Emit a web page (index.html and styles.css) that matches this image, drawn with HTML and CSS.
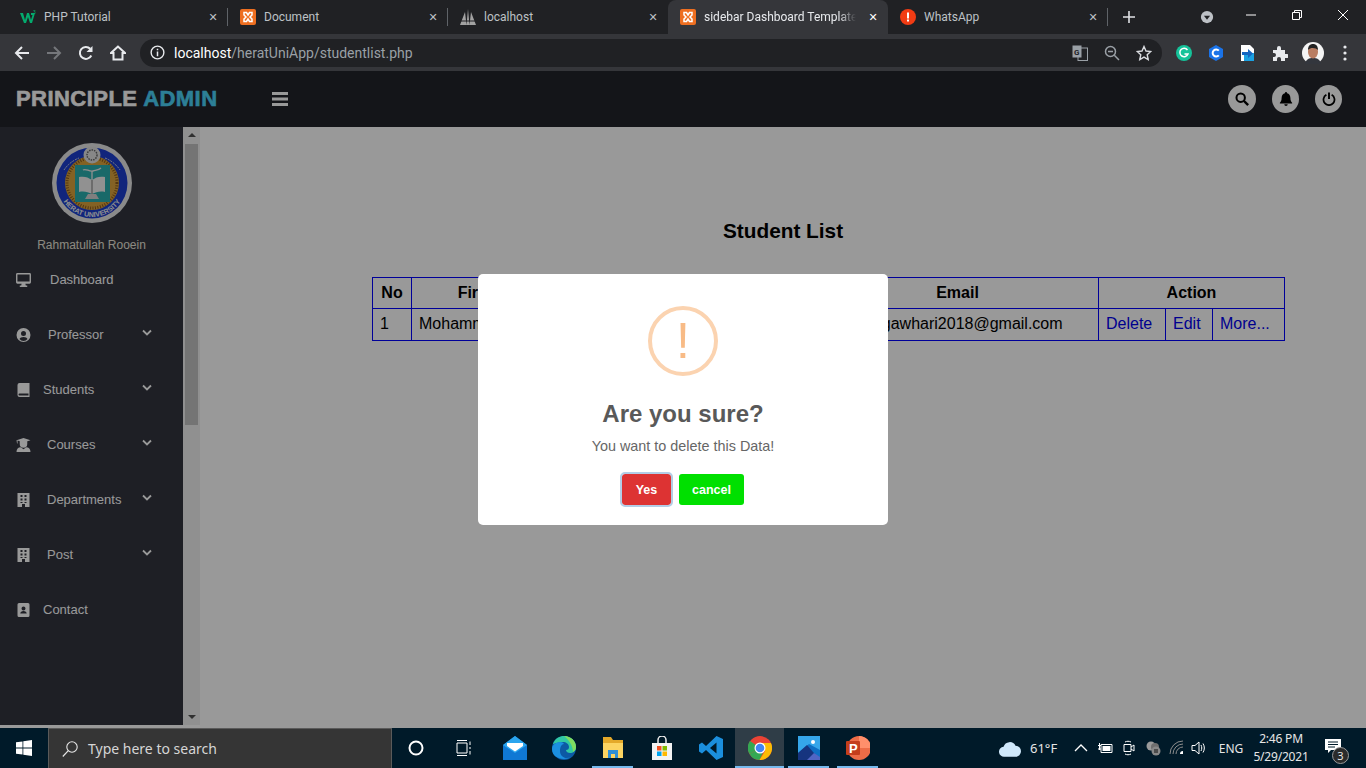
FILE: index.html
```html
<!DOCTYPE html>
<html lang="en">
<head>
    <meta charset="UTF-8">
    <title>Student List</title>
    <link rel="stylesheet" href="styles.css">
</head>
<body>

<div class="chrome">
    <div class="tabstrip">
        <div class="tab tab-sep">
            <svg class="favicon" viewBox="0 0 16 16"><path d="M0 4h3l2 7 2-7h2l2 7 1.500-5H11V4h4l-3 10H10L8 8l-2 6H4z" fill="#04aa6d"/><text x="13" y="5" class="fav-sup">3</text></svg>
            <span class="tab-title">PHP Tutorial</span>
            <span class="tab-close">✕</span>
        </div>
        <div class="tab tab-sep">
            <svg class="favicon" viewBox="0 0 16 16"><rect width="16" height="16" rx="2" fill="#ee6f21"/><path d="M4 3.500h2.500L8 6l1.500-2.500H12V6l-2 2 2 2v2.500H9.500L8 10l-1.500 2.500H4V10l2-2-2-2z" fill="none" stroke="#fff" stroke-width="1.500"/></svg>
            <span class="tab-title">Document</span>
            <span class="tab-close">✕</span>
        </div>
        <div class="tab">
            <svg class="favicon" viewBox="0 0 16 16"><path d="M0 16 5 3l1.500 13zM6.500 16 8 0l1.500 16zM9.500 16 11 3l5 13z" fill="#a2a2a2"/><path d="M1 12h14" stroke="#202124"/></svg>
            <span class="tab-title">localhost</span>
            <span class="tab-close">✕</span>
        </div>
        <div class="tab tab-active">
            <svg class="favicon" viewBox="0 0 16 16"><rect width="16" height="16" rx="2" fill="#ee6f21"/><path d="M4 3.500h2.500L8 6l1.500-2.500H12V6l-2 2 2 2v2.500H9.500L8 10l-1.500 2.500H4V10l2-2-2-2z" fill="none" stroke="#fff" stroke-width="1.500"/></svg>
            <span class="tab-title">sidebar Dashboard Template</span>
            <span class="tab-close">✕</span>
        </div>
        <div class="tab tab-sep">
            <svg class="favicon" viewBox="0 0 16 16"><circle cx="8" cy="8" r="8" fill="#f13c14"/><rect x="7" y="3.500" width="2" height="6" fill="#fff"/><rect x="7" y="10.500" width="2" height="2" fill="#fff"/></svg>
            <span class="tab-title">WhatsApp</span>
            <span class="tab-close">✕</span>
        </div>
        <svg class="newtab" viewBox="0 0 12 12"><path d="M6 0v12M0 6h12" stroke="#dfe1e5" stroke-width="1.600"/></svg>
        <svg class="tab-search" viewBox="0 0 16 16"><circle cx="8" cy="8" r="7" fill="#bdc1c6"/><path d="M4.500 6.500h7L8 11z" fill="#202124"/></svg>
        <div class="winctl">
            <svg viewBox="0 0 10 10"><path d="M0 5h10" stroke="#fff"/></svg>
            <svg viewBox="0 0 10 10"><path d="M.5 2.500h7v7h-7zM2.500 2.500v-2h7v7h-2" fill="none" stroke="#fff"/></svg>
            <svg viewBox="0 0 10 10"><path d="M0 0l10 10M10 0 0 10" stroke="#fff"/></svg>
        </div>
    </div>
    <div class="toolbar">
        <svg class="tool" viewBox="0 0 16 16"><path d="M15 8H2M8 2 2 8l6 6" fill="none" stroke="#e8eaed" stroke-width="2"/></svg>
        <svg class="tool" viewBox="0 0 16 16"><path d="M1 8h13M8 2l6 6-6 6" fill="none" stroke="#75777b" stroke-width="2"/></svg>
        <svg class="tool" viewBox="0 0 16 16"><path d="M13.300 10.500A6 6 0 1 1 12.200 3.700" fill="none" stroke="#e8eaed" stroke-width="2"/><path d="M14.500 1v6h-6z" fill="#e8eaed"/></svg>
        <svg class="tool" viewBox="0 0 16 16"><path d="M8 1.500 1 8h2.500v6.500h9V8H15z" fill="none" stroke="#e8eaed" stroke-width="2"/></svg>
        <div class="omnibox">
            <svg class="omni-info" viewBox="0 0 16 16"><circle cx="8" cy="8" r="6.800" fill="none" stroke="#e8eaed" stroke-width="1.500"/><path d="M7.200 7h1.600v5H7.200zM7.200 4h1.600v1.600H7.200z" fill="#e8eaed"/></svg>
            <span class="url"><b>localhost</b>/heratUniApp/studentlist.php</span>
            <svg class="omni-icon" viewBox="0 0 16 16"><rect x="6" y="3" width="9.500" height="12.500" fill="none" stroke="#9aa0a6"/><rect x=".5" y=".5" width="9" height="12" fill="#9aa0a6"/><text x="2" y="10" class="fav-g">G</text></svg>
            <svg class="omni-icon" viewBox="0 0 16 16"><circle cx="6.500" cy="6.500" r="5" fill="none" stroke="#9aa0a6" stroke-width="1.500"/><path d="M4 6.500h5M10.300 10.300 15 15" stroke="#9aa0a6" stroke-width="1.500"/></svg>
            <svg class="omni-icon" viewBox="0 0 16 16"><path d="M8 1.500l2 4.500 4.800.5-3.600 3.200 1 4.800L8 12.100l-4.200 2.400 1-4.800L1.200 6.500 6 6z" fill="none" stroke="#dadce0" stroke-width="1.400"/></svg>
        </div>
        <svg class="ext" viewBox="0 0 16 16"><circle cx="8" cy="8" r="8" fill="#15c39a"/><path d="M11.500 5A4.200 4.200 0 1 0 12 9H8.500" fill="none" stroke="#fff" stroke-width="1.500"/></svg>
        <svg class="ext" viewBox="0 0 16 16"><path d="M8 0l7 4v8l-7 4-7-4V4z" fill="#1a73e8"/><path d="M10.800 5.700A3.500 3.500 0 1 0 10.800 10.300" fill="none" stroke="#fff" stroke-width="2"/></svg>
        <svg class="ext" viewBox="0 0 16 16"><path d="M1 0h9l4 4v12H1z" fill="#fff"/><path d="M4 8h10v8H4z" fill="#1ba1e2"/><path d="M2 7h6V4l5 4.500L8 13v-3H2z" fill="#1565c0"/></svg>
        <svg class="ext" viewBox="0 0 16 16"><path d="M1 5h4V3a2 2 0 0 1 4 0v2h4v4h2a2 2 0 0 1 0 4h-2v3H9v-2a2 2 0 0 0-4 0v2H1v-4h1a2 2 0 0 0 0-4H1z" fill="#e8eaed"/></svg>
        <svg class="avatar" viewBox="0 0 22 22"><circle cx="11" cy="11" r="11" fill="#f4f4f4"/><path d="M3 22c1-5 4-6 8-6s7 1 8 6z" fill="#33363d"/><ellipse cx="11" cy="10" rx="5" ry="6.500" fill="#b97d62"/><path d="M6 8c0-4 2-6 5-6s5 2 5 6c-2-2-7-3-10 0z" fill="#222"/></svg>
        <svg class="kebab" viewBox="0 0 4 16"><circle cx="2" cy="2" r="1.600" fill="#e8eaed"/><circle cx="2" cy="8" r="1.600" fill="#e8eaed"/><circle cx="2" cy="14" r="1.600" fill="#e8eaed"/></svg>
    </div>
</div>

<div class="app">
    <header class="topbar">
        <div class="brand">PRINCIPLE <span>ADMIN</span></div>
        <svg class="burger" viewBox="0 0 16 14"><path d="M0 0h16v3H0zM0 5.500h16v3H0zM0 11h16v3H0z" fill="#fff"/></svg>
        <div class="top-actions">
            <div class="round-btn"><svg viewBox="0 0 16 16"><circle cx="6.500" cy="6.500" r="4.800" fill="none" stroke="#000" stroke-width="2.300"/><path d="M10 10l5 5" stroke="#000" stroke-width="2.800"/></svg></div>
            <div class="round-btn"><svg viewBox="0 0 16 16"><path d="M8 0a1.200 1.200 0 0 1 1.200 1.300C11.500 1.900 13 3.800 13 6.500c0 3.700 1 4.500 2 5.700v.8H1v-.8c1-1.200 2-2 2-5.700 0-2.700 1.500-4.600 3.800-5.200A1.200 1.200 0 0 1 8 0zM6 14h4a2 2 0 0 1-4 0z"/></svg></div>
            <div class="round-btn"><svg viewBox="0 0 16 16"><path d="M5 3.200a6.300 6.300 0 1 0 6 0" fill="none" stroke="#000" stroke-width="2"/><path d="M8 .5v7.500" stroke="#000" stroke-width="2.200"/></svg></div>
        </div>
    </header>

    <div class="layout">
        <aside class="sidebar">
            <div class="side-scroll">
                <div class="profile">
                    <svg class="logo" viewBox="0 0 80 80">
                        <defs><path id="arcText" d="M6 40a34 34 0 0 0 68 0"/></defs>
                        <circle cx="40" cy="40" r="40" fill="#e6e6e6"/>
                        <circle cx="40" cy="40" r="35.500" fill="#1d3fcf"/>
                        <circle cx="40" cy="40" r="27" fill="#dca43c"/>
                        <circle cx="40" cy="40" r="25" fill="none" stroke="#8c5b1c" stroke-width="3" stroke-dasharray="1 1.500"/>
                        <rect x="23" y="22" width="35" height="37" fill="#2bb0b0"/>
                        <path d="M27 34c5-1 9 0 13 3 4-3 8-4 13-3v15c-5-1-9 0-13 2-4-2-8-3-13-2z" fill="#f2f2f2"/>
                        <path d="M40 37v14" stroke="#777"/>
                        <path d="M31 27c3-2 6 2 10 1 4-1 6-1 8-3M40 28v9" fill="none" stroke="#eee" stroke-width="1.300"/>
                        <path d="M33 56h14l-3-5h-8z" fill="#d4d4d4"/>
                        <circle cx="40" cy="12" r="8.500" fill="#e2e2e2"/>
                        <circle cx="40" cy="12" r="5" fill="none" stroke="#666" stroke-width="1.500" stroke-dasharray="1.500 1"/>
                        <path d="M12 27a32 32 0 0 1 15-12M53 15a32 32 0 0 1 15 12" fill="none" stroke="#ddd" stroke-dasharray="2 1"/>
                        <text class="logo-text"><textPath href="#arcText" startOffset="50%">HERAT UNIVERSITY</textPath></text>
                    </svg>
                    <div class="profile-name">Rahmatullah Rooein</div>
                </div>
                <ul class="nav">
                    <li class="nav-item w-34"><span class="nav-icon"><svg viewBox="0 0 16 15"><path d="M1.500 0h13A1.500 1.500 0 0 1 16 1.500v8.500a1.500 1.500 0 0 1-1.500 1.500h-13A1.500 1.500 0 0 1 0 10V1.500A1.500 1.500 0 0 1 1.500 0zM1.500 1.500v7.500h13V1.500zM6 11.500h4l.5 2h1.500V15H4v-1.500h1.500z"/></svg></span><span class="nav-label">Dashboard</span></li>
                    <li class="nav-item w-32"><span class="nav-icon"><svg viewBox="0 0 14 14"><path fill-rule="evenodd" d="M7 0a7 7 0 1 1 0 14A7 7 0 0 1 7 0zm0 3a2.500 2.500 0 1 0 0 5 2.500 2.500 0 0 0 0-5zM3 11a5 5 0 0 0 8 0c-.5-1.300-2-2-4-2s-3.500.7-4 2z"/></svg></span><span class="nav-label">Professor</span><svg class="chev" viewBox="0 0 10 7"><path d="M1 1.500l4 4 4-4" fill="none" stroke="#fff" stroke-width="1.800"/></svg></li>
                    <li class="nav-item w-27"><span class="nav-icon"><svg viewBox="0 0 12 14"><path d="M2 0h10v14H2a2 2 0 0 1-2-2V2a2 2 0 0 1 2-2zM2 10.500a1 1 0 0 0 0 2h9v-2z"/></svg></span><span class="nav-label">Students</span><svg class="chev" viewBox="0 0 10 7"><path d="M1 1.500l4 4 4-4" fill="none" stroke="#fff" stroke-width="1.800"/></svg></li>
                    <li class="nav-item w-31"><span class="nav-icon"><svg viewBox="0 0 13 13"><path d="M0 2 6.500 0 13 2 10 3v2.500a3.500 3.500 0 0 1-7 0V3L1 2.400V5H.500zM0 13c0-3 1.500-4.500 4-4.500l2.500 2 2.500-2c2.500 0 4 1.500 4 4.500z"/></svg></span><span class="nav-label">Courses</span><svg class="chev" viewBox="0 0 10 7"><path d="M1 1.500l4 4 4-4" fill="none" stroke="#fff" stroke-width="1.800"/></svg></li>
                    <li class="nav-item w-31"><span class="nav-icon"><svg viewBox="0 0 12 14"><path fill-rule="evenodd" d="M0 0h12v14H7.500v-3h-3v3H0zM3 2v2h2V2zM7 2v2h2V2zM3 5.500v2h2v-2zM7 5.500v2h2v-2zM3 9v1h2V9zM7 9v1h2V9z"/></svg></span><span class="nav-label">Departments</span><svg class="chev" viewBox="0 0 10 7"><path d="M1 1.500l4 4 4-4" fill="none" stroke="#fff" stroke-width="1.800"/></svg></li>
                    <li class="nav-item w-31"><span class="nav-icon"><svg viewBox="0 0 12 14"><path fill-rule="evenodd" d="M0 0h12v14H7.500v-3h-3v3H0zM3 2v2h2V2zM7 2v2h2V2zM3 5.500v2h2v-2zM7 5.500v2h2v-2zM3 9v1h2V9zM7 9v1h2V9z"/></svg></span><span class="nav-label">Post</span><svg class="chev" viewBox="0 0 10 7"><path d="M1 1.500l4 4 4-4" fill="none" stroke="#fff" stroke-width="1.800"/></svg></li>
                    <li class="nav-item w-27"><span class="nav-icon"><svg viewBox="0 0 12 14"><path fill-rule="evenodd" d="M1.500 0h9A1.500 1.500 0 0 1 12 1.500v11a1.500 1.500 0 0 1-1.500 1.500h-9A1.500 1.500 0 0 1 0 12.500v-11A1.500 1.500 0 0 1 1.500 0zM6 3.500a2 2 0 1 0 0 4 2 2 0 0 0 0-4zM2.800 10.500h6.400c0-1.500-1.400-2.500-3.200-2.500s-3.200 1-3.200 2.500z"/></svg></span><span class="nav-label">Contact</span></li>
                </ul>
            </div>
            <div class="scrollbar">
                <span class="sb-up"></span>
                <div class="sb-thumb"></div>
                <span class="sb-down"></span>
            </div>
        </aside>

        <main class="content">
            <h2 class="page-title">Student List</h2>
            <table class="students">
                <colgroup>
                    <col class="c-no"><col class="c-first"><col class="c-last"><col class="c-father"><col class="c-email"><col class="c-del"><col class="c-edit"><col class="c-more">
                </colgroup>
                <thead>
                    <tr>
                        <th>No</th>
                        <th>First Name</th>
                        <th>Last Name</th>
                        <th>Phone</th>
                        <th>Email</th>
                        <th colspan="3">Action</th>
                    </tr>
                </thead>
                <tbody>
                    <tr>
                        <td>1</td>
                        <td>Mohammad</td>
                        <td>Gawhari</td>
                        <td>0700000000</td>
                        <td>hameedgawhari2018@gmail.com</td>
                        <td><a href="#">Delete</a></td>
                        <td><a href="#">Edit</a></td>
                        <td><a href="#">More...</a></td>
                    </tr>
                </tbody>
            </table>
        </main>
    </div>

    <div class="overlay">
        <div class="modal">
            <div class="warn-icon">!</div>
            <h3 class="modal-title">Are you sure?</h3>
            <p class="modal-text">You want to delete this Data!</p>
            <div class="modal-actions">
                <button class="btn btn-yes">Yes</button>
                <button class="btn btn-cancel">cancel</button>
            </div>
        </div>
    </div>
</div>

<footer class="taskbar">
    <div class="start"><svg viewBox="0 0 16 16"><path d="M0 2.300 6.500 1.400v6.200H0zM7.300 1.300 16 0v7.600H7.300zM0 8.400h6.500v6.200L0 13.700zM7.300 8.400H16V16l-8.700-1.300z" fill="#fff"/></svg></div>
    <div class="search">
        <svg viewBox="0 0 16 16"><circle cx="10" cy="6" r="5.200" fill="none" stroke="#e6e6e6" stroke-width="1.100"/><path d="M6.300 9.700 .8 15.500" stroke="#e6e6e6" stroke-width="1.200"/></svg>
        <span>Type here to search</span>
    </div>
    <div class="slot"><svg class="ic-16" viewBox="0 0 16 16"><circle cx="8" cy="8" r="6.500" fill="none" stroke="#fff" stroke-width="2"/></svg></div>
    <div class="slot slot-last"><svg class="ic-16" viewBox="0 0 16 16"><path d="M1 3h10v10H1zM1 .5h10M1 15.500h10M14 1.500V5M14 7v2M14 11v3.500" fill="none" stroke="#fff"/></svg></div>
    <div class="slot slot-app"><svg class="ic-24" viewBox="0 0 24 24"><path d="M0 9 12 0l12 9v15H0z" fill="#0f78d4"/><path d="M0 9l12 8 12-8-12-9z" fill="#2aa5ee"/><path d="M4 7h16v3l-8 5.500L4 10z" fill="#fff"/></svg></div>
    <div class="slot slot-app"><svg class="ic-24" viewBox="0 0 24 24"><circle cx="12" cy="12" r="12" fill="#0c59a4"/><path d="M1 8C3 2 8 0 12 0c7 0 12 5 12 11 0 4-3 6-6 6-2 0-4-1-4-3 2 0 3-1 3-3 0-3-3-5-6-5-5 0-9 2-10 2z" fill="#30c7a3"/><path d="M12 0c7 0 12 5 12 11 0 2-1 4-3 5 0-6-4-12-9-16z" fill="#7fdc5f"/><path d="M8 15c0 5 5 9 11 6-6 4-19 2-19-8 0-4 4-7 8-7 3 0 4 2 4 2-3 0-4 4-4 7z" fill="#1b8fe0"/></svg></div>
    <div class="slot slot-app slot-on"><svg class="ic-24" viewBox="0 0 24 24"><path d="M2 1h8l2 3h10v18H2z" fill="#e4a92a"/><path d="M2 7h20v15H2z" fill="#fcd462"/><path d="M7 14h10v8H7z" fill="#2f8fd6"/><path d="M10 18h4v4h-4z" fill="#fcd462"/></svg></div>
    <div class="slot slot-app"><svg class="ic-24" viewBox="0 0 24 24"><path d="M2 7h20v17H2z" fill="#f3f3f3"/><path d="M8 7V4a4 4 0 0 1 8 0v3" fill="none" stroke="#eee" stroke-width="1.500"/><rect x="7" y="10" width="4.500" height="4.500" fill="#f25022"/><rect x="12.500" y="10" width="4.500" height="4.500" fill="#7fba00"/><rect x="7" y="15.500" width="4.500" height="4.500" fill="#00a4ef"/><rect x="12.500" y="15.500" width="4.500" height="4.500" fill="#ffb900"/></svg></div>
    <div class="slot slot-app"><svg class="ic-24" viewBox="0 0 24 24"><path d="M17.500 0 24 3v18l-6.500 3L7 14l-4 3.500L0 15.500v-7L3 6.500 7 10z" fill="#1b8fdd"/><path d="M17.500 6.500 11 12l6.500 5.500z" fill="#001a29"/></svg></div>
    <div class="slot slot-app slot-on slot-active"><svg class="ic-24" viewBox="0 0 24 24"><circle cx="12" cy="12" r="12" fill="#ea4335"/><path d="M12 12 1.500 18A12 12 0 0 1 2 5z" fill="#34a853"/><path d="M1.500 18 12 12l5 0-5.500 12A12 12 0 0 1 1.500 18z" fill="#34a853"/><path d="M12 7h11a12 12 0 0 1-11.500 17l5.500-9z" fill="#fbbc05"/><circle cx="12" cy="12" r="5.500" fill="#fff"/><circle cx="12" cy="12" r="4.300" fill="#4285f4"/></svg></div>
    <div class="slot slot-app slot-on"><svg class="ic-24" viewBox="0 0 24 24"><path d="M1 0h22v24H1z" fill="#0e6fc4"/><path d="M1 0h22v14L12 8 1 17z" fill="#35a6ea"/><circle cx="16" cy="6" r="2" fill="#fff"/><path d="M1 17l9-8 13 15H1z" fill="#16347f"/><path d="M10 24l7-7 6 4v3z" fill="#5165c4"/></svg></div>
    <div class="slot slot-app slot-on"><svg class="ic-24" viewBox="0 0 24 24"><circle cx="13" cy="12" r="12" fill="#ed6c47"/><path d="M13 0a12 12 0 0 1 12 12H13z" fill="#ff8f6b"/><rect x="0" y="5" width="14" height="14" rx="1" fill="#c43e1c"/><text x="3" y="16.500" class="ppt-p">P</text></svg></div>
    <div class="tray">
        <svg class="tray-cloud" viewBox="0 0 24 18"><path d="M6 18a5.500 5.500 0 0 1-1-11A7 7 0 0 1 18 6a6 6 0 0 1 0 12z" fill="#cfe8fb"/></svg>
        <span class="tray-temp">61°F</span>
        <svg class="tray-ic" viewBox="0 0 16 16"><path d="M2 11l6-6 6 6" fill="none" stroke="#fff" stroke-width="1.300"/></svg>
        <svg class="tray-ic" viewBox="0 0 16 16"><path d="M4 4.500h11v8H4zM1 5.500h3M1 9h3M2.500 3v7" fill="none" stroke="#fff"/><rect x="5.500" y="6" width="8" height="5" fill="#fff"/></svg>
        <svg class="tray-ic" viewBox="0 0 16 16"><path d="M3 4.500h7v7H3zM10 7l3-2v6l-3-2M4 2c2-1 4-1 6 0M4 14c2 1 4 1 6 0" fill="none" stroke="#fff"/></svg>
        <svg class="tray-ic" viewBox="0 0 16 16"><circle cx="6" cy="6" r="4.500" fill="#9a9a9a"/><circle cx="10" cy="7" r="4" fill="#6e6e6e"/><circle cx="11" cy="11" r="4.500" fill="#888"/><path d="M10 9v4M12 9v4" stroke="#111"/></svg>
        <svg class="tray-ic tray-wifi" viewBox="0 0 16 16"><path d="M1 14A13 13 0 0 1 14 1M4 14a10 10 0 0 1 10-10M7 14a7 7 0 0 1 7-7" fill="none" stroke="#8d8d8d"/><path d="M11 14a3 3 0 0 1 3-3v3z" fill="#fff"/></svg>
        <svg class="tray-ic" viewBox="0 0 16 16"><path d="M1 5.500h3L8 2v12l-4-3.500H1zM10 5c1 2 1 4 0 6M12 3.500c1.800 3 1.800 6 0 9" fill="none" stroke="#fff"/></svg>
        <span class="tray-lang">ENG</span>
        <div class="clock"><div>2:46 PM</div><div>5/29/2021</div></div>
        <div class="notif">
            <svg viewBox="0 0 16 16"><path d="M0 1h16v11H6l-3 3v-3H0z" fill="#fff"/><path d="M3 4h10M3 6.500h10M3 9h7" stroke="#001a29"/></svg>
            <span class="notif-badge">3</span>
        </div>
    </div>
</footer>

</body>
</html>
```

FILE: styles.css
```css
* {
    box-sizing: border-box;
}

html, body {
    margin: 0;
    height: 768px;
    overflow: hidden;
}

body {
    display: flex;
    flex-direction: column;
    font-family: "Liberation Sans", Arial, sans-serif;
    background: #fff;
}

svg {
    display: block;
    flex: none;
}

/* browser chrome */
.chrome {
    height: 71px;
    flex: none;
    background: #202124;
    font-family: Roboto, sans-serif;
}

.tabstrip {
    height: 34px;
    display: flex;
    align-items: center;
    padding-left: 8px;
}

.tab {
    position: relative;
    width: 220px;
    height: 34px;
    display: flex;
    align-items: center;
    padding: 0 9px 0 12px;
    color: #bdc1c6;
    font-size: 12px;
}

.tab-sep::after {
    content: "";
    position: absolute;
    right: 0;
    top: 8px;
    height: 18px;
    width: 1px;
    background: #5f6368;
}

.tab-active {
    background: #35363a;
    border-radius: 8px 8px 0 0;
    color: #e8eaed;
}

.favicon {
    width: 16px;
    height: 16px;
    margin-right: 8px;
}

.fav-sup {
    font-size: 5px;
    fill: #04aa6d;
}

.fav-g {
    font-size: 8px;
    font-weight: bold;
    fill: #202124;
}

.tab-title {
    flex: 1;
    overflow: hidden;
    white-space: nowrap;
}

.tab-active .tab-title {
    -webkit-mask-image: linear-gradient(to right, #000 135px, transparent 152px);
    mask-image: linear-gradient(to right, #000 135px, transparent 152px);
}

.tab-close {
    font-size: 11px;
    width: 12px;
    text-align: center;
    color: #bdc1c6;
    font-family: "DejaVu Sans", sans-serif;
}

.tab-active .tab-close {
    color: #fff;
}

.newtab {
    width: 12px;
    height: 12px;
    margin-left: 15px;
}

.tab-search {
    width: 14px;
    height: 14px;
    margin-left: 65px;
}

.winctl {
    margin-left: auto;
    display: flex;
    height: 34px;
}

.winctl svg {
    width: 46px;
    height: 10px;
    margin-top: 10px;
}

.toolbar {
    height: 37px;
    background: #35363a;
    display: flex;
    align-items: center;
    padding-left: 14px;
}

.tool {
    width: 16px;
    height: 16px;
    margin-right: 16px;
}

.omnibox {
    width: 1022px;
    height: 28px;
    margin-left: -2px;
    margin-right: 14px;
    border-radius: 14px;
    background: #202124;
    display: flex;
    align-items: center;
    padding-left: 10px;
}

.omni-info {
    width: 15px;
    height: 15px;
    margin-right: 9px;
}

.url {
    flex: 1;
    font-size: 14px;
    color: #9aa0a6;
}

.url b {
    font-weight: normal;
    color: #fff;
}

.omni-icon {
    width: 16px;
    height: 16px;
    margin-right: 16px;
}

.omni-icon:last-child {
    margin-right: 10px;
}

.ext {
    width: 16px;
    height: 16px;
    margin-right: 16px;
}

.avatar {
    width: 22px;
    height: 22px;
    margin-left: -2px;
    margin-right: 19px;
}

.kebab {
    width: 4px;
    height: 16px;
}

/* app */
.app {
    position: relative;
    height: 657px;
    flex: none;
    display: flex;
    flex-direction: column;
}

.topbar {
    height: 56px;
    flex: none;
    background: #22232a;
    display: flex;
    align-items: center;
    padding: 0 24px 0 16px;
}

.brand {
    width: 256px;
    font-size: 22px;
    font-weight: bold;
    letter-spacing: .45px;
    color: #fff;
    -webkit-text-stroke: .6px;
}

.brand span {
    color: #4bd4fa;
}

.burger {
    width: 16px;
    height: 14px;
}

.top-actions {
    margin-left: auto;
    display: flex;
    gap: 16px;
}

.round-btn {
    width: 27px;
    height: 28px;
    border-radius: 50%;
    background: #fff;
    display: flex;
    align-items: center;
    justify-content: center;
}

.round-btn:first-child {
    width: 28px;
}

.round-btn svg {
    width: 14px;
    height: 14px;
}

.layout {
    flex: 1;
    display: flex;
}

.sidebar {
    width: 200px;
    height: 598px;
    flex: none;
    display: flex;
    background: #32343f;
}

.side-scroll {
    width: 183px;
    padding-top: 16px;
}

.profile {
    text-align: center;
}

.logo {
    width: 80px;
    height: 80px;
    margin: 0 auto;
}

.logo-text {
    font-size: 7px;
    font-weight: bold;
    fill: #eee;
    text-anchor: middle;
}

.profile-name {
    margin-top: 15px;
    margin-bottom: -1px;
    font-size: 12px;
    line-height: 15px;
    color: #e8e4d8;
}

.nav {
    list-style: none;
    margin: 0;
    padding: 0;
}

.nav-item {
    height: 55px;
    display: flex;
    align-items: center;
    padding-left: 16px;
    color: #fff;
    font-size: 13px;
    position: relative;
}

.nav-icon {
    display: flex;
    align-items: center;
}

.nav-icon svg {
    height: 14px;
    width: 15px;
    fill: #fff;
}

.w-34 .nav-icon { width: 34px; }
.w-32 .nav-icon { width: 32px; }
.w-31 .nav-icon { width: 31px; }
.w-27 .nav-icon { width: 27px; }

.chev {
    position: absolute;
    left: 142px;
    top: 22px;
    width: 10px;
    height: 7px;
}

.scrollbar {
    width: 17px;
    background: #f1f1f1;
    display: flex;
    flex-direction: column;
    align-items: center;
}

.sb-up, .sb-down {
    width: 0;
    height: 0;
    border-left: 4px solid transparent;
    border-right: 4px solid transparent;
    margin: 6px 0 0;
}

.sb-up {
    border-bottom: 4px solid #505050;
}

.sb-down {
    margin: auto 0 6px;
    border-top: 4px solid #505050;
}

.sb-thumb {
    width: 13px;
    height: 281px;
    margin-top: 7px;
    background: #c1c1c1;
}

.content {
    flex: 1;
    padding-top: 92px;
}

.page-title {
    margin: 0 0 34px;
    text-align: center;
    font-size: 20.8px;
    line-height: 24px;
    font-weight: bold;
    color: #000;
}

.students {
    width: 912px;
    margin-left: 172px;
    border-collapse: collapse;
    table-layout: fixed;
    font-size: 16px;
}

.c-no { width: 39px; }
.c-first { width: 175px; }
.c-last { width: 115px; }
.c-father { width: 115px; }
.c-email { width: 282px; }
.c-del { width: 67px; }
.c-edit { width: 47px; }
.c-more { width: 72px; }

.students th, .students td {
    border: 1px solid #0000ff;
    padding: 0 7px;
    white-space: nowrap;
    overflow: hidden;
}

.students th {
    height: 31px;
    text-align: center;
}

.students td {
    height: 32px;
    padding-bottom: 2px;
}

.students a {
    color: #0000ee;
    text-decoration: none;
}

/* delete dialog */
.overlay {
    position: absolute;
    inset: 0;
    background: rgba(0, 0, 0, .4);
    display: flex;
    align-items: center;
    justify-content: center;
}

.modal {
    width: 410px;
    height: 251px;
    background: #fff;
    border-radius: 5px;
    padding-top: 32px;
    text-align: center;
}

.warn-icon {
    width: 70px;
    height: 70px;
    margin: 0 auto 24px;
    border: 4px solid #fbd3b0;
    border-radius: 50%;
    color: #f8bb86;
    font-size: 50px;
    line-height: 62px;
}

.modal-title {
    margin: 0;
    font-size: 24px;
    line-height: 28px;
    font-weight: bold;
    color: #595959;
}

.modal-text {
    margin: 9px 0 0;
    font-size: 14.4px;
    line-height: 18px;
    color: #666;
}

.modal-actions {
    margin-top: 19px;
    display: flex;
    justify-content: center;
    gap: 8px;
}

.btn {
    height: 31px;
    border: 0;
    border-radius: 3px;
    padding: 0;
    color: #fff;
    font-family: inherit;
    font-size: 12.5px;
    font-weight: bold;
}

.btn-yes {
    width: 49px;
    background: #dd3333;
    outline: 2px solid #b3cde6;
    outline-offset: 0;
}

.btn-cancel {
    width: 65px;
    background: #00e000;
}

/* taskbar */
.taskbar {
    height: 40px;
    flex: none;
    background: #001a29;
    display: flex;
    align-items: stretch;
    font-family: "Noto Sans", sans-serif;
    color: #fff;
}

.start {
    width: 48px;
    display: flex;
    align-items: center;
    justify-content: center;
}

.start svg {
    width: 16px;
    height: 16px;
}

.search {
    width: 344px;
    background: #353535;
    border: 1px solid #5a5a5a;
    border-width: 1px 1px 0;
    display: flex;
    align-items: center;
    padding-left: 13px;
    font-size: 14px;
    color: #d6d6d6;
}

.search svg {
    width: 16px;
    height: 16px;
    margin-right: 10px;
}

.slot {
    width: 48px;
    display: flex;
    align-items: center;
    justify-content: center;
    position: relative;
}

.slot-last {
    margin-right: 2px;
}

.slot-app {
    width: 49px;
}

.slot-on::after {
    content: "";
    position: absolute;
    left: 4px;
    right: 4px;
    bottom: 0;
    height: 2px;
    background: #76b9ed;
}

.slot-active {
    background: #2f3d47;
}

.slot-active::after {
    left: 0;
    right: 0;
}

.ic-16 {
    width: 16px;
    height: 16px;
}

.ic-24 {
    width: 24px;
    height: 24px;
}

.tray {
    margin-left: auto;
    display: flex;
    align-items: center;
    font-size: 12px;
    color: #e6e6e6;
}

.tray-cloud {
    width: 22px;
    height: 17px;
    margin-right: 9px;
}

.tray-temp {
    font-size: 13px;
    width: 43px;
}

.tray-ic {
    width: 16px;
    height: 16px;
    margin-right: 8px;
}

.tray-wifi {
    margin-right: 6px;
}

.tray-lang {
    margin-left: 1px;
    width: 30px;
    text-align: center;
}

.clock {
    width: 70px;
    text-align: center;
    line-height: 18px;
    letter-spacing: -.2px;
}

.notif {
    position: relative;
    width: 50px;
    height: 40px;
    display: flex;
    align-items: center;
    padding-left: 9px;
}

.notif svg {
    width: 16px;
    height: 16px;
    margin-bottom: 4px;
}

.notif-badge {
    position: absolute;
    left: 16px;
    top: 19px;
    width: 17px;
    height: 17px;
    border-radius: 50%;
    background: #2b2b2b;
    border: 1px solid #999;
    font-size: 11px;
    line-height: 15px;
    text-align: center;
}

.ppt-p {
    font-size: 13px;
    font-weight: bold;
    fill: #fff;
    font-family: "Liberation Sans", sans-serif;
}
```
